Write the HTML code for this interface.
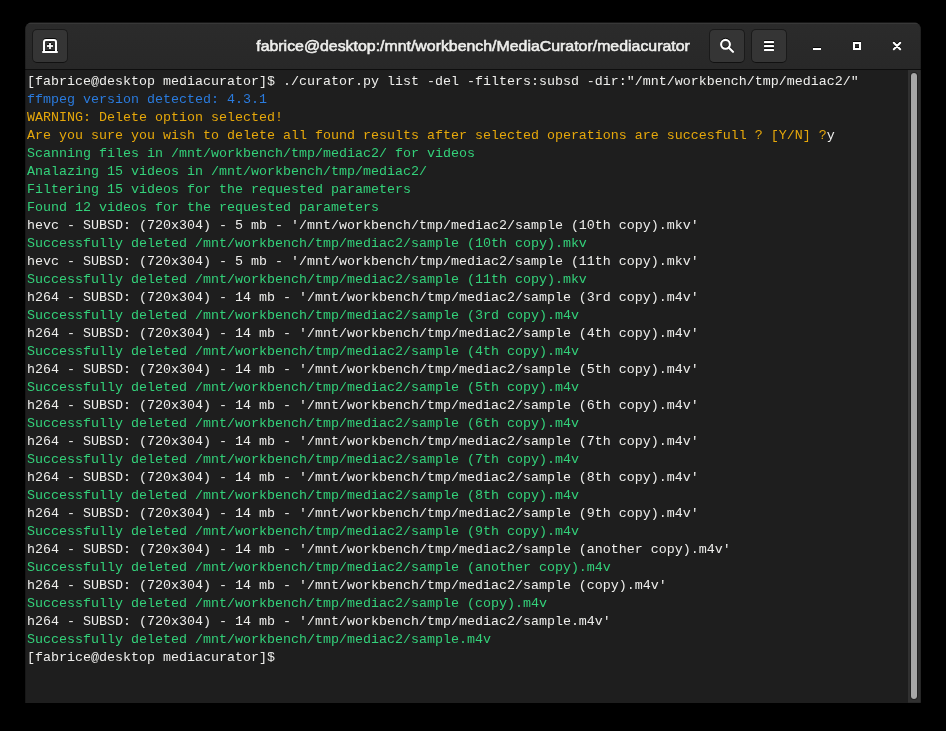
<!DOCTYPE html>
<html><head><meta charset="utf-8">
<style>
html,body{margin:0;padding:0;background:#000;width:946px;height:731px;overflow:hidden}
#win{position:absolute;left:25px;top:22px;width:896px;height:681px;background:#1e1e1e;border-radius:8px 8px 0 0;overflow:hidden}
#hdr{will-change:transform;position:absolute;left:0;top:0;width:896px;height:46px;background:linear-gradient(#2b2b2b,#282828);border-top:1px solid #161616;border-bottom:1px solid #0e0e0e;box-shadow:inset 0 1px #383838}
.btn{position:absolute;top:6px;width:34px;height:32px;background:#353535;border:1px solid #1a1a1a;border-bottom-color:#111;border-radius:5px}
#title{text-shadow:0 -1px rgba(0,0,0,0.5);position:absolute;left:0;width:896px;top:14px;text-align:center;font-family:"Liberation Sans",sans-serif;font-weight:normal;-webkit-text-stroke:0.6px #eeeeec;font-size:15.3px;color:#eeeeec;white-space:nowrap;transform:scaleX(1.038);transform-origin:447.5px 0}
#term{position:absolute;left:2.4px;top:51px;will-change:transform;font-family:"Liberation Mono",monospace;font-size:13.3333px;line-height:18px;color:#eeeeec;white-space:pre;margin:0}
.b{color:#2a7bde}.y{color:#e6a80b}.g{color:#33d17a}
#track{position:absolute;left:883px;top:48px;width:13px;height:632px;background:#313131;border-bottom:1px solid #2a2a2a}
#thumb{position:absolute;left:885px;top:50px;width:6px;height:626px;background:#a8a8a8;border-radius:4px;border:1px solid rgba(0,0,0,0.3);background-clip:padding-box}
#edge{position:absolute;left:0;top:0;width:896px;height:681px;box-sizing:border-box;border:1px solid rgba(0,0,0,0.22);border-top:none;border-bottom:none;pointer-events:none}
</style></head><body>
<div id="win">
 <div id="hdr">
  <div class="btn" style="left:7px"></div>
  <div class="btn" style="left:684px"></div>
  <div class="btn" style="left:726px"></div>
  <div id="title">fabrice@desktop:/mnt/workbench/MediaCurator/mediacurator</div>
 </div>
<pre id="term">[fabrice@desktop mediacurator]$ ./curator.py list -del -filters:subsd -dir:"/mnt/workbench/tmp/mediac2/"
<span class="b">ffmpeg version detected: 4.3.1</span>
<span class="y">WARNING: Delete option selected!</span>
<span class="y">Are you sure you wish to delete all found results after selected operations are succesfull ? [Y/N] ?</span>y
<span class="g">Scanning files in /mnt/workbench/tmp/mediac2/ for videos</span>
<span class="g">Analazing 15 videos in /mnt/workbench/tmp/mediac2/</span>
<span class="g">Filtering 15 videos for the requested parameters</span>
<span class="g">Found 12 videos for the requested parameters</span>
hevc - SUBSD: (720x304) - 5 mb - '/mnt/workbench/tmp/mediac2/sample (10th copy).mkv'
<span class="g">Successfully deleted /mnt/workbench/tmp/mediac2/sample (10th copy).mkv</span>
hevc - SUBSD: (720x304) - 5 mb - '/mnt/workbench/tmp/mediac2/sample (11th copy).mkv'
<span class="g">Successfully deleted /mnt/workbench/tmp/mediac2/sample (11th copy).mkv</span>
h264 - SUBSD: (720x304) - 14 mb - '/mnt/workbench/tmp/mediac2/sample (3rd copy).m4v'
<span class="g">Successfully deleted /mnt/workbench/tmp/mediac2/sample (3rd copy).m4v</span>
h264 - SUBSD: (720x304) - 14 mb - '/mnt/workbench/tmp/mediac2/sample (4th copy).m4v'
<span class="g">Successfully deleted /mnt/workbench/tmp/mediac2/sample (4th copy).m4v</span>
h264 - SUBSD: (720x304) - 14 mb - '/mnt/workbench/tmp/mediac2/sample (5th copy).m4v'
<span class="g">Successfully deleted /mnt/workbench/tmp/mediac2/sample (5th copy).m4v</span>
h264 - SUBSD: (720x304) - 14 mb - '/mnt/workbench/tmp/mediac2/sample (6th copy).m4v'
<span class="g">Successfully deleted /mnt/workbench/tmp/mediac2/sample (6th copy).m4v</span>
h264 - SUBSD: (720x304) - 14 mb - '/mnt/workbench/tmp/mediac2/sample (7th copy).m4v'
<span class="g">Successfully deleted /mnt/workbench/tmp/mediac2/sample (7th copy).m4v</span>
h264 - SUBSD: (720x304) - 14 mb - '/mnt/workbench/tmp/mediac2/sample (8th copy).m4v'
<span class="g">Successfully deleted /mnt/workbench/tmp/mediac2/sample (8th copy).m4v</span>
h264 - SUBSD: (720x304) - 14 mb - '/mnt/workbench/tmp/mediac2/sample (9th copy).m4v'
<span class="g">Successfully deleted /mnt/workbench/tmp/mediac2/sample (9th copy).m4v</span>
h264 - SUBSD: (720x304) - 14 mb - '/mnt/workbench/tmp/mediac2/sample (another copy).m4v'
<span class="g">Successfully deleted /mnt/workbench/tmp/mediac2/sample (another copy).m4v</span>
h264 - SUBSD: (720x304) - 14 mb - '/mnt/workbench/tmp/mediac2/sample (copy).m4v'
<span class="g">Successfully deleted /mnt/workbench/tmp/mediac2/sample (copy).m4v</span>
h264 - SUBSD: (720x304) - 14 mb - '/mnt/workbench/tmp/mediac2/sample.m4v'
<span class="g">Successfully deleted /mnt/workbench/tmp/mediac2/sample.m4v</span>
[fabrice@desktop mediacurator]$</pre>
 <div id="track"></div>
 <div id="thumb"></div>
 <div id="edge"></div>
</div>
<svg id="icons" width="946" height="731" style="position:absolute;left:0;top:0">
 <g fill="#000" stroke="#000" opacity="0.8" transform="translate(0,-1)">
  <path d="M44 52 V42 Q44 40 46 40 H54 Q56 40 56 42 V52" fill="none" stroke-width="2"/>
  <rect x="42" y="51" width="16" height="2" rx="1" stroke="none"/>
  <rect x="47" y="45.1" width="6" height="1.8" stroke="none"/>
  <rect x="49.1" y="43" width="1.8" height="6" stroke="none"/>
  <circle cx="725.5" cy="44.3" r="4.4" fill="none" stroke-width="2.1"/>
  <path d="M728.7 47.5 L733 51.8" stroke-width="2.2" stroke-linecap="round"/>
  <rect x="764" y="41" width="10" height="2" rx="0.5" stroke="none"/>
  <rect x="764" y="45" width="10" height="2" rx="0.5" stroke="none"/>
  <rect x="764" y="49" width="10" height="2" rx="0.5" stroke="none"/>
  <rect x="813" y="48" width="8" height="2" stroke="none"/>
  <rect x="854" y="43" width="6" height="6" fill="none" stroke-width="2"/>
  <path d="M893.8 42.8 L900.2 49.2 M900.2 42.8 L893.8 49.2" stroke-width="2" stroke-linecap="round"/>
 </g><g fill="#fff" stroke="#fff">
  <path d="M44 52 V42 Q44 40 46 40 H54 Q56 40 56 42 V52" fill="none" stroke-width="2"/>
  <rect x="42" y="51" width="16" height="2" rx="1" stroke="none"/>
  <rect x="47" y="45.1" width="6" height="1.8" stroke="none"/>
  <rect x="49.1" y="43" width="1.8" height="6" stroke="none"/>
  <circle cx="725.5" cy="44.3" r="4.4" fill="none" stroke-width="2.1"/>
  <path d="M728.7 47.5 L733 51.8" stroke-width="2.2" stroke-linecap="round"/>
  <rect x="764" y="41" width="10" height="2" rx="0.5" stroke="none"/>
  <rect x="764" y="45" width="10" height="2" rx="0.5" stroke="none"/>
  <rect x="764" y="49" width="10" height="2" rx="0.5" stroke="none"/>
  <rect x="813" y="48" width="8" height="2" stroke="none"/>
  <rect x="854" y="43" width="6" height="6" fill="none" stroke-width="2"/>
  <path d="M893.8 42.8 L900.2 49.2 M900.2 42.8 L893.8 49.2" stroke-width="2" stroke-linecap="round"/>
 </g>
</svg>
</body></html>
